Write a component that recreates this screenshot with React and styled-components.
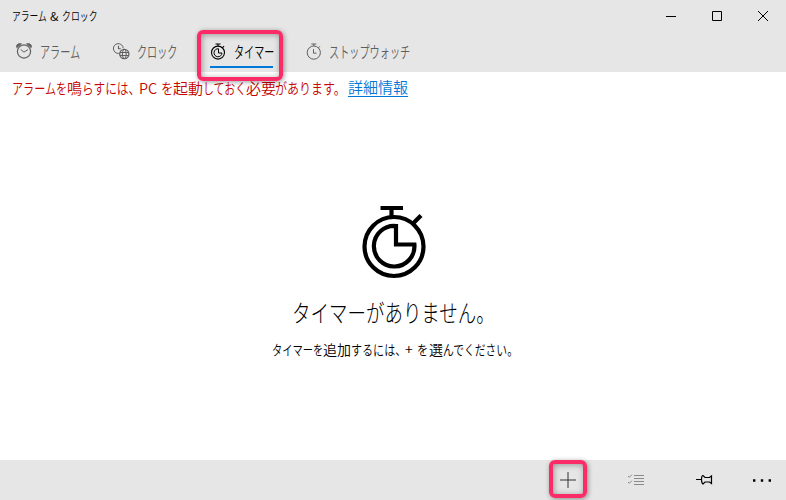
import React from "react";
import styled, { createGlobalStyle } from "styled-components";

const Global = createGlobalStyle`
  * { box-sizing: border-box; }
  body {
    margin: 0;
    background: #fff;
    color: #000;
    font-family: "Noto Sans CJK JP", "Noto Sans", sans-serif;
  }
`;

const Window = styled.div`
  width: 786px;
  height: 500px;
  display: flex;
  flex-direction: column;
  overflow: hidden;
  background: #fff;
`;

const TitleBar = styled.header`
  height: 32px;
  flex: none;
  display: flex;
  justify-content: space-between;
  align-items: center;
  padding-left: 12px;
  background: #e6e6e6;
`;

const WindowButtons = styled.div`
  display: flex;
`;

const WindowButton = styled.button`
  width: 46px;
  height: 32px;
  padding: 0;
  border: 0;
  background: none;
  display: grid;
  place-items: center;
`;

const Tabs = styled.nav`
  height: 40px;
  flex: none;
  display: flex;
  padding-left: 16px;
  gap: 32px;
  background: #e6e6e6;
`;

const Tab = styled.div`
  position: relative;
  height: 36px;
  display: flex;
  align-items: center;
  gap: 7px;
  padding-top: 4px;
  width: ${(p) => p.$width}px;
  color: ${(p) => (p.$active ? "#000" : "#5f5f5f")};
  border-bottom: 2px solid ${(p) => (p.$active ? "#0078d7" : "transparent")};
`;

const Highlight = styled.div`
  position: absolute;
  left: ${(p) => p.$left}px;
  top: ${(p) => p.$top}px;
  width: ${(p) => p.$width}px;
  height: ${(p) => p.$height}px;
  border: 4px solid #fb2b68;
  border-radius: 6px;
  pointer-events: none;
  z-index: 2;
  box-shadow: 1px 1px 5px rgba(0, 0, 0, 0.4), inset 1px 1px 6px rgba(0, 0, 0, 0.35);
`;

const Line = styled.div`
  display: flex;
  align-items: center;
  height: ${(p) => p.$height}px;
  font-size: ${(p) => p.$size}px;
  font-weight: ${(p) => p.$weight || 350};
  line-height: ${(p) => p.$height}px;
`;

const RunBox = styled.span`
  flex: none;
  width: ${(p) => p.$width}px;
  margin-left: ${(p) => p.$gap || 0}px;
  white-space: pre;
`;

const RunText = styled.span`
  display: inline-block;
  transform: scaleX(${(p) => p.$scale});
  transform-origin: left center;
`;

const Run = ({ width, scale = 1, gap, children }) => (
  <RunBox $width={width} $gap={gap}>
    <RunText $scale={scale}>{children}</RunText>
  </RunBox>
);

const Notice = styled.section`
  height: 34px;
  flex: none;
  padding: 4px 12px;
  color: #c50500;
`;

const Link = styled.a`
  margin-left: 6px;
  height: 19px;
  line-height: 24px;
  margin-top: -1px;
  color: #0078d7;
  border-bottom: 1px solid #0078d7;
  display: flex;
  align-items: center;
`;

const Empty = styled.main`
  flex: 1;
  display: flex;
  flex-direction: column;
  align-items: center;
  padding: 100px 0 0 1px;
`;

const Heading = styled.div`
  margin-top: 14px;
  width: 204px;
`;

const Hint = styled.div`
  margin-top: 3px;
  width: 243px;
`;

const CommandBar = styled.footer`
  height: 40px;
  flex: none;
  display: flex;
  justify-content: flex-end;
  background: #e6e6e6;
`;

const Command = styled.button`
  position: relative;
  width: ${(p) => p.$width || 68}px;
  height: 40px;
  padding: 0;
  border: 0;
  background: none;
  color: ${(p) => p.$color || "#000"};
  display: grid;
  place-items: center;
`;

const Icon = styled.svg`
  display: block;
  flex: none;
  fill: none;
  stroke: currentColor;
  overflow: visible;
`;

const AlarmIcon = () => (
  <Icon width="17" height="17" viewBox="0 0 17 17">
    <circle cx="8" cy="8.5" r="6.6" strokeWidth="1.2" />
    <path d="M4.7 6.5 8 9.1l4-2.5" />
    <path d="M.8 4.8C-.2 2 1.600.2 5.400.7Z M15.200 4.800c1-2.800-.8-4.600-4.600-4.100Z" fill="currentColor" strokeWidth=".7" />
  </Icon>
);

const ClockIcon = () => (
  <Icon width="17" height="17" viewBox="0 0 17 17">
    <path d="M5.800 10.400A4.900 4.900 0 1 1 10.200 5.200" />
    <path d="M5.500 2.800v3h2.300" strokeWidth="1.1" />
    <circle cx="11.3" cy="11" r="4.6" strokeWidth="1.3" />
    <ellipse cx="11.3" cy="11" rx="1.9" ry="4.6" />
    <path d="M7 9.500h8.600M7 12.500h8.600" />
  </Icon>
);

const TimerSmallIcon = () => (
  <Icon width="17" height="17" viewBox="0 0 17 17">
    <circle cx="8" cy="9.6" r="6.5" strokeWidth="1.1" />
    <path d="M8.5 5.8a4 4 0 1 0 3.5 4.2H8.5Z" />
    <path d="M5.500 1h5M8 1v2.200M12.300 4.900l1.800-1.800" strokeWidth="1.1" />
  </Icon>
);

const StopwatchIcon = () => (
  <Icon width="17" height="17" viewBox="0 0 17 17">
    <circle cx="8.8" cy="9.6" r="6.6" />
    <path d="M6.300 1h5M8.800 1v2M13.300 4.900l1.600-1.600M8.500 6.200v4h3" />
  </Icon>
);

const TimerLargeIcon = () => (
  <Icon width="64" height="72" viewBox="0 0 64 72">
    <circle cx="32" cy="40.5" r="29.5" strokeWidth="4.2" />
    <path d="M34 20A20.300 20.300 0 1 0 52.400 38.500H34Z" strokeWidth="4.2" />
    <path d="M18.500 2h22.500M29.500 2v9M51 17.500l8-8" strokeWidth="4.2" />
  </Icon>
);

export default function App() {
  return (
    <>
      <Global />
      <Window>
        <TitleBar>
          <Line $size={12} $height={32}>
            <Run width={35} scale={0.73}>アラーム</Run>
            <Run width={10} gap={3} scale={1.05}>&amp;</Run>
            <Run width={38} gap={2} scale={0.74}>クロック</Run>
          </Line>
          <WindowButtons>
            <WindowButton aria-label="最小化">
              <Icon width="10" height="10"><path d="M0 5.5h10" /></Icon>
            </WindowButton>
            <WindowButton aria-label="最大化">
              <Icon width="10" height="10"><path d="M.5.5h9v9h-9z" /></Icon>
            </WindowButton>
            <WindowButton aria-label="閉じる">
              <Icon width="10" height="10"><path d="m0 0 10 10M10 0 0 10" /></Icon>
            </WindowButton>
          </WindowButtons>
        </TitleBar>
        <Tabs>
          <Tab $width={65}>
            <AlarmIcon />
            <Line $size={15.5} $height={22}><Run width={41} scale={0.65}>アラーム</Run></Line>
          </Tab>
          <Tab $width={65}>
            <ClockIcon />
            <Line $size={15.5} $height={22}><Run width={41} scale={0.65}>クロック</Run></Line>
          </Tab>
          <Tab $width={63} $active>
            <TimerSmallIcon />
            <Line $size={15.5} $height={22}><Run width={41} scale={0.65}>タイマー</Run></Line>
            <Highlight $left={-13} $top={-2} $width={86} $height={51} />
          </Tab>
          <Tab $width={105}>
            <StopwatchIcon />
            <Line $size={15.5} $height={22}><Run width={81} scale={0.655}>ストップウォッチ</Run></Line>
          </Tab>
        </Tabs>
        <Notice>
          <Line $size={15} $height={24}>
            <Run width={55} scale={0.74}>アラームを</Run>
            <Run width={15}>鳴</Run>
            <Run width={57} scale={0.78}>らすには、</Run>
            <Run width={18} scale={0.96}>PC</Run>
            <Run width={12} gap={4} scale={0.82}>を</Run>
            <Run width={30}>起動</Run>
            <Run width={43} scale={0.73}>しておく</Run>
            <Run width={29}>必要</Run>
            <Run width={67} scale={0.8}>があります。</Run>
            <Link><Run width={60}>詳細情報</Run></Link>
          </Line>
        </Notice>
        <Empty>
          <TimerLargeIcon />
          <Heading>
            <Line $size={24} $height={40} $weight={300}>
              <Run width={204} scale={0.77}>タイマーがありません。</Run>
            </Line>
          </Heading>
          <Hint>
            <Line $size={14} $height={28}>
              <Run width={51} scale={0.73}>タイマーを</Run>
              <Run width={28}>追加</Run>
              <Run width={54} scale={0.79}>するには、</Run>
              <Run width={8}>+</Run>
              <Run width={12} gap={4} scale={0.8}>を</Run>
              <Run width={14}>選</Run>
              <Run width={71} scale={0.77}>んでください。</Run>
            </Line>
          </Hint>
        </Empty>
        <CommandBar>
          <Command aria-label="追加" $color="#333">
            <Icon width="16" height="16"><path d="M8 0v16M0 8h16" /></Icon>
            <Highlight $left={15} $top={0} $width={38} $height={38} />
          </Command>
          <Command aria-label="選択" $color="#8b8b8b">
            <Icon width="16" height="13">
              <path d="M6 1.5h10M6 4.5h10M6 7.5h10M6 10.5h10M0 2l1.300 1.300L4 .6M0 8l1.300 1.300L4 6.600" />
            </Icon>
          </Command>
          <Command aria-label="ピン留め">
            <Icon width="17" height="10">
              <path d="M0 4.500h5.500M5.500 4.500C5.500 2 6 .5 7 .5L9 2.500h4.500l2-1.500v7.500l-2-1.500H9L7 9C6 8.500 5.500 7 5.500 4.500Z" strokeWidth="1.2" />
            </Icon>
          </Command>
          <Command $width={48} aria-label="その他">
            <Icon width="18" height="4">
              <path d="M0 2.500h2.400M7.800 2.500h2.400M15.600 2.500H18" strokeWidth="2.4" />
            </Icon>
          </Command>
        </CommandBar>
      </Window>
    </>
  );
}
